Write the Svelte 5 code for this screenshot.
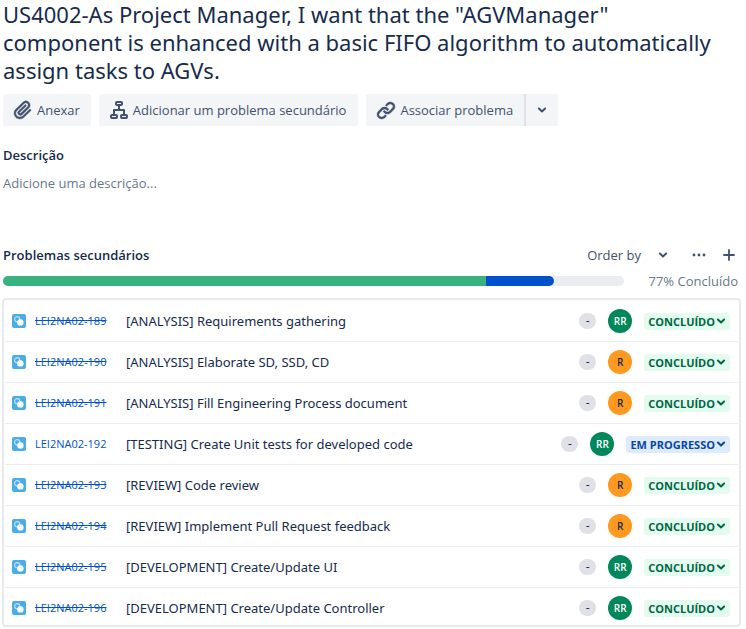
<script>
  const issues = [
    { id: 189, title: '[ANALYSIS] Requirements gathering', who: 'RR', done: true },
    { id: 190, title: '[ANALYSIS] Elaborate SD, SSD, CD', who: 'R', done: true },
    { id: 191, title: '[ANALYSIS] Fill Engineering Process document', who: 'R', done: true },
    { id: 192, title: '[TESTING] Create Unit tests for developed code', who: 'RR', done: false },
    { id: 193, title: '[REVIEW] Code review', who: 'R', done: true },
    { id: 194, title: '[REVIEW] Implement Pull Request feedback', who: 'R', done: true },
    { id: 195, title: '[DEVELOPMENT] Create/Update UI', who: 'RR', done: true },
    { id: 196, title: '[DEVELOPMENT] Create/Update Controller', who: 'RR', done: true },
  ];
</script>

{#snippet chevron()}
  <svg width="10" height="10" viewBox="0 0 10 10" aria-hidden="true">
    <path d="M1.9 3.5 L5 6.4 L8.1 3.5" fill="none" stroke="currentColor" stroke-width="2" stroke-linecap="round" stroke-linejoin="round" />
  </svg>
{/snippet}

<main>
  <h1>US4002-As Project Manager, I want that the "AGVManager" component is enhanced with a basic FIFO algorithm to automatically assign tasks to AGVs.</h1>

  <div class="toolbar">
    <button class="action" type="button">
      <svg width="24" height="24" viewBox="0 0 24 24" aria-hidden="true">
        <path fill="currentColor" stroke="currentColor" stroke-width="0.4" d="M11.643 17.965c-1.53 1.495-4.016 1.496-5.542.004a3.773 3.773 0 0 1 .002-5.412l7.147-6.985a2.316 2.316 0 0 1 3.233-.003c.893.873.895 2.282.004 3.153l-6.703 6.55a.653.653 0 0 1-.914-.008.62.62 0 0 1 0-.902l6.229-6.087a.941.941 0 0 0 0-1.353.995.995 0 0 0-1.384 0l-6.23 6.087a2.502 2.502 0 0 0 0 3.607 2.643 2.643 0 0 0 3.683.009l6.703-6.55a4.074 4.074 0 0 0-.003-5.859 4.306 4.306 0 0 0-6.002.003l-7.148 6.985a5.655 5.655 0 0 0-.001 8.118c2.29 2.239 6.015 2.238 8.31-.005l6.686-6.533a.941.941 0 0 0 0-1.353.995.995 0 0 0-1.384 0l-6.686 6.534z" />
      </svg>
      <span>Anexar</span>
    </button>
    <button class="action" type="button">
      <svg width="24" height="24" viewBox="0 0 24 24" fill="none" stroke="currentColor" stroke-width="2" stroke-linejoin="round" aria-hidden="true">
        <rect x="9" y="4" width="6" height="3" rx="1" />
        <rect x="4" y="17" width="6" height="3" rx="1" />
        <rect x="14" y="17" width="6" height="3" rx="1" />
        <path d="M12 8v4M7 16v-4h10v4" />
      </svg>
      <span>Adicionar um problema secundário</span>
    </button>
    <div class="split">
      <button class="action" type="button">
        <svg width="24" height="24" viewBox="0 0 24 24" fill="currentColor" stroke="currentColor" stroke-width="0.4" aria-hidden="true">
          <path d="M12.856 5.457l-.937.92a1.002 1.002 0 0 0 0 1.437 1.047 1.047 0 0 0 1.463 0l.984-.966c.967-.95 2.542-1.135 3.602-.288a2.54 2.54 0 0 1 .203 3.81l-2.903 2.852a2.646 2.646 0 0 1-3.696 0l-1.11-1.09L9 13.57l1.108 1.089c1.822 1.788 4.802 1.788 6.622 0l2.905-2.852a4.558 4.558 0 0 0-.357-6.82c-1.893-1.517-4.695-1.226-6.422.47" />
          <path d="M11.144 19.543l.937-.92a1.002 1.002 0 0 0 0-1.437 1.047 1.047 0 0 0-1.462 0l-.985.966c-.967.95-2.542 1.135-3.602.288a2.54 2.54 0 0 1-.203-3.81l2.903-2.852a2.646 2.646 0 0 1 3.696 0l1.11 1.09L15 11.43l-1.108-1.089c-1.822-1.788-4.802-1.788-6.622 0l-2.905 2.852a4.558 4.558 0 0 0 .357 6.82c1.893 1.517 4.695 1.226 6.422-.47" />
        </svg>
        <span>Associar problema</span>
      </button>
      <button class="more" type="button" aria-label="Mais opções">{@render chevron()}</button>
    </div>
  </div>

  <section class="description">
    <h2>Descrição</h2>
    <p>Adicione uma descrição...</p>
  </section>

  <section>
    <header>
      <h2>Problemas secundários</h2>
      <button class="order" type="button">Order by {@render chevron()}</button>
      <button class="icon dots" type="button" aria-label="Mais">
        <svg width="14" height="14" viewBox="0 0 14 14" fill="currentColor" aria-hidden="true">
          <circle cx="2" cy="7" r="1.4" /><circle cx="7" cy="7" r="1.4" /><circle cx="12" cy="7" r="1.4" />
        </svg>
      </button>
      <button class="icon" type="button" aria-label="Adicionar">
        <svg width="14" height="14" viewBox="0 0 14 14" aria-hidden="true">
          <path d="M7 2v10M2 7h10" fill="none" stroke="currentColor" stroke-width="1.8" stroke-linecap="round" />
        </svg>
      </button>
    </header>

    <div class="progress">
      <div class="track" role="progressbar" aria-label="Progresso" aria-valuenow="77" aria-valuemin="0" aria-valuemax="100">
        <div class="completed"></div>
        <div class="ongoing"></div>
      </div>
      <span>77% Concluído</span>
    </div>

    <ul>
      {#each issues as issue (issue.id)}
        <li>
          <svg width="14" height="14" viewBox="0 0 14 14" aria-hidden="true">
            <rect width="14" height="14" rx="2" fill="#4bade8" />
            <circle cx="5.2" cy="5.2" r="2.6" fill="none" stroke="#b7def6" stroke-width="1.2" />
            <circle cx="8.4" cy="8.4" r="3.2" fill="#fff" />
          </svg>
          <a class:done={issue.done} href="#LEI2NA02-{issue.id}">LEI2NA02-{issue.id}</a>
          <span class="title">{issue.title}</span>
          <span class="estimate">-</span>
          <span class="avatar" class:orange={issue.who === 'R'}>{issue.who}</span>
          <button class="status" class:progressing={!issue.done} type="button">
            {issue.done ? 'CONCLUÍDO' : 'EM PROGRESSO'}
            {@render chevron()}
          </button>
        </li>
      {/each}
    </ul>
  </section>
</main>

<style>
  :global(body) {
    background: #fff;
  }
  main {
    padding: 0 4px 0 3px;
    font: 13px/20px 'Open Sans', 'Noto Sans', sans-serif;
    color: #172b4d;
  }
  h1, h2, p, ul {
    margin: 0;
    padding: 0;
  }
  h1 {
    padding-right: 24px;
    font-family: 'Noto Sans', 'Open Sans', sans-serif;
    font-size: 22px;
    line-height: 28px;
    font-weight: 400;
  }
  h2 {
    font-size: 13px;
    line-height: 20px;
    font-weight: 600;
  }
  button {
    display: flex;
    align-items: center;
    border: 0;
    margin: 0;
    padding: 0;
    font: inherit;
    color: #42526e;
    background: none;
    cursor: pointer;
  }
  svg {
    flex: none;
    display: block;
  }
  .toolbar {
    display: flex;
    gap: 8px;
    margin-top: 10px;
  }
  .action {
    height: 32px;
    gap: 2px;
    padding: 0 12px 0 8px;
    border-radius: 3px;
    background: #f4f5f7;
    white-space: nowrap;
  }
  .split {
    display: flex;
    gap: 2px;
    border-radius: 3px;
    overflow: hidden;
    background: #dfe1e6;
  }
  .split button {
    border-radius: 0;
  }
  .split .action {
    padding-right: 11px;
  }
  .toolbar > .action:first-child {
    padding-right: 11px;
  }
  .more {
    width: 32px;
    justify-content: center;
    background: #f4f5f7;
  }
  .description {
    margin: 19px 0 52px;
  }
  .description p {
    margin-top: 8px;
    color: #6b778c;
  }
  header {
    display: flex;
    align-items: center;
    padding-right: 6px;
  }
  header h2 {
    flex: 1;
  }
  .order {
    gap: 17px;
  }
  .icon {
    margin-left: 16px;
  }
  .dots {
    margin-left: 24px;
  }
  .progress {
    display: flex;
    align-items: center;
    gap: 24px;
    margin: 6px 0 7px;
    padding-right: 4px;
    color: #6b778c;
  }
  .track {
    flex: 1;
    display: flex;
    height: 10px;
    border-radius: 5px;
    overflow: hidden;
    background: #ebecf0;
  }
  .completed {
    width: 77.7%;
    background: #36b37e;
  }
  .ongoing {
    width: 11%;
    background: #0052cc;
    border-radius: 0 5px 5px 0;
  }
  ul {
    list-style: none;
    margin: 0 1px 0 -1px;
    border: 2px solid #e8eaee;
    border-radius: 4px;
    padding: 1px 1px 0;
  }
  li {
    display: flex;
    align-items: center;
    height: 40px;
    padding: 0 8px 0 7px;
    border-bottom: 1px solid #ebecf0;
  }
  li:last-child {
    height: 34px;
    padding-top: 3px;
    border-bottom: 0;
  }
  a {
    width: 75px;
    margin: 0 16px 0 9px;
    font-size: 11px;
    color: #0052cc;
    text-decoration: none;
    white-space: nowrap;
  }
  .done {
    text-decoration: line-through;
  }
  .title {
    flex: 1;
    font-family: 'Noto Sans', 'Open Sans', sans-serif;
  }
  .estimate {
    width: 17px;
    height: 16px;
    border-radius: 8px;
    background: #dfe1e6;
    font-size: 12px;
    line-height: 16px;
    text-align: center;
  }
  .avatar {
    width: 24px;
    height: 24px;
    margin: 0 12px;
    border-radius: 12px;
    background: #00875a;
    color: #fff;
    font-size: 10px;
    line-height: 24px;
    font-weight: 600;
    text-align: center;
  }
  .orange {
    background: #ff991f;
    color: #172b4d;
  }
  .status {
    height: 17px;
    gap: 1px;
    padding: 0 4px;
    border-radius: 3px;
    background: #e3fcef;
    color: #006644;
    font-size: 11px;
    line-height: 17px;
    font-weight: 700;
    white-space: nowrap;
  }
  .progressing {
    background: #deebff;
    color: #0747a6;
  }
</style>
